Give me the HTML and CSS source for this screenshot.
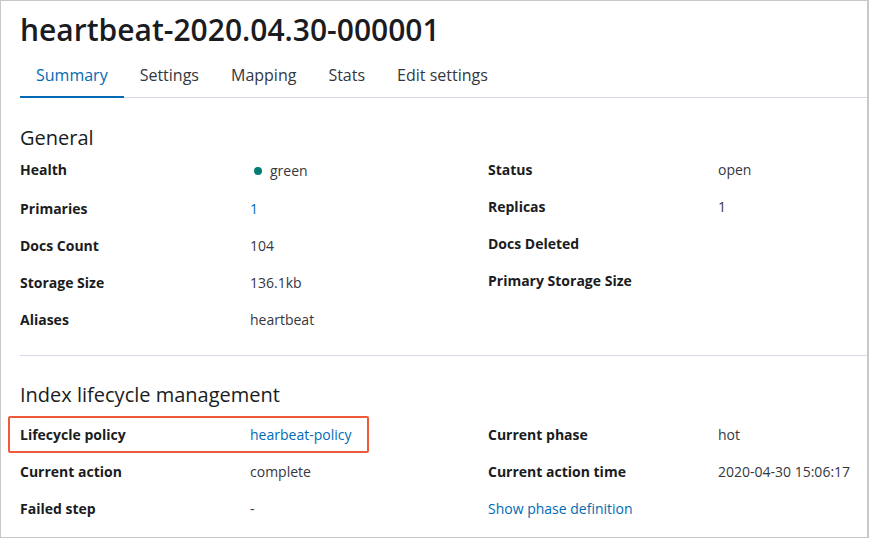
FILE: index.html
```html
<!DOCTYPE html>
<html lang="en">
<head>
  <meta charset="UTF-8" />
  <title>heartbeat-2020.04.30-000001</title>
  <link rel="stylesheet" href="styles.css">
</head>
<body>
  <div class="frame">
    <h1 class="title">heartbeat-2020.04.30-000001</h1>

    <!-- Tabs -->
    <div class="tabs">
      <button class="tab is-selected">Summary</button>
      <button class="tab">Settings</button>
      <button class="tab">Mapping</button>
      <button class="tab">Stats</button>
      <button class="tab">Edit settings</button>
    </div>

    <!-- General -->
    <section class="section section-general">
      <h2 class="section-title">General</h2>
      <div class="columns">
        <dl class="desc">
          <div class="desc-row desc-row-tall">
            <dt>Health</dt>
            <dd><span class="health"><span class="dot"></span>green</span></dd>
          </div>
          <div class="desc-row"><dt>Primaries</dt><dd class="link">1</dd></div>
          <div class="desc-row"><dt>Docs Count</dt><dd>104</dd></div>
          <div class="desc-row"><dt>Storage Size</dt><dd>136.1kb</dd></div>
          <div class="desc-row"><dt>Aliases</dt><dd>heartbeat</dd></div>
        </dl>
        <dl class="desc desc-side">
          <div class="desc-row"><dt>Status</dt><dd>open</dd></div>
          <div class="desc-row"><dt>Replicas</dt><dd>1</dd></div>
          <div class="desc-row"><dt>Docs Deleted</dt><dd></dd></div>
          <div class="desc-row"><dt>Primary Storage Size</dt><dd></dd></div>
        </dl>
      </div>
    </section>

    <hr class="rule">

    <!-- Index lifecycle management -->
    <section class="section section-ilm">
      <h2 class="section-title">Index lifecycle management</h2>
      <div class="columns">
        <dl class="desc">
          <div class="desc-row is-marked">
            <dt>Lifecycle policy</dt>
            <dd><a class="link" href="#">hearbeat-policy</a></dd>
          </div>
          <div class="desc-row"><dt>Current action</dt><dd>complete</dd></div>
          <div class="desc-row"><dt>Failed step</dt><dd>-</dd></div>
        </dl>
        <dl class="desc">
          <div class="desc-row"><dt>Current phase</dt><dd>hot</dd></div>
          <div class="desc-row"><dt>Current action time</dt><dd>2020-04-30 15:06:17</dd></div>
          <div class="desc-row"><a class="link row-link" href="#">Show phase definition</a></div>
        </dl>
      </div>
    </section>
  </div>
</body>
</html>
```

FILE: styles.css
```css
body {
  margin: 0;
  font-family: 'Open Sans', 'Noto Sans', sans-serif;
  color: #343741;
  background: #fff;
}
.frame {
  width: 869px;
  height: 538px;
  box-sizing: border-box;
  border: 1px solid #c8c8c8;
  border-right-width: 2px;
  padding-left: 19px;
  overflow: hidden;
}
.title {
  margin: 11px 0 0;
  font-size: 30px;
  line-height: 36px;
  font-weight: 600;
  color: #1a1c21;
}
.tabs {
  display: flex;
  border-bottom: 1px solid #d3dae6;
}
.tab {
  margin: 0 0 -1px;
  padding: 6px 16px 0;
  border: none;
  border-bottom: 2px solid transparent;
  background: none;
  font-family: inherit;
  font-size: 16px;
  line-height: 42px;
  color: #343741;
  cursor: pointer;
}
.tab.is-selected {
  color: #006bb4;
  border-bottom-color: #006bb4;
}
.section-title {
  margin: 0;
  font-size: 20px;
  line-height: 28px;
  font-weight: 400;
  color: #1a1c21;
}
.section-general .section-title {
  margin: 26px 0 -2px;
}
.section-ilm .section-title {
  margin: 25px 0 7px;
}
.columns {
  display: grid;
  grid-template-columns: 468px 1fr;
}
.desc {
  margin: 0;
}
.desc-side {
  margin-top: 1px;
}
.desc-row {
  position: relative;
  display: grid;
  grid-template-columns: 230px 1fr;
  align-items: center;
  height: 37px;
  font-size: 14px;
  line-height: 20px;
}
.desc-row-tall {
  height: 40px;
}
.desc-row dt {
  font-weight: 700;
  color: #1a1c21;
}
.desc-row dd {
  margin: 0;
}
.row-link {
  grid-column: 1 / 3;
}
.link {
  color: #006bb4;
  text-decoration: none;
}
.health {
  display: inline-flex;
  align-items: center;
}
.dot {
  width: 8px;
  height: 8px;
  margin: 0 8px 0 4px;
  border-radius: 50%;
  background: #017d73;
}
.rule {
  margin: 17px 0 0;
  border: none;
  border-top: 1px solid #d3dae6;
}
/* annotation box drawn over the policy row */
.is-marked::after {
  content: '';
  position: absolute;
  top: 0;
  bottom: 0;
  left: -12px;
  width: 361px;
  box-sizing: border-box;
  border: 2.5px solid #ef5a3b;
  border-radius: 2px;
}
```
